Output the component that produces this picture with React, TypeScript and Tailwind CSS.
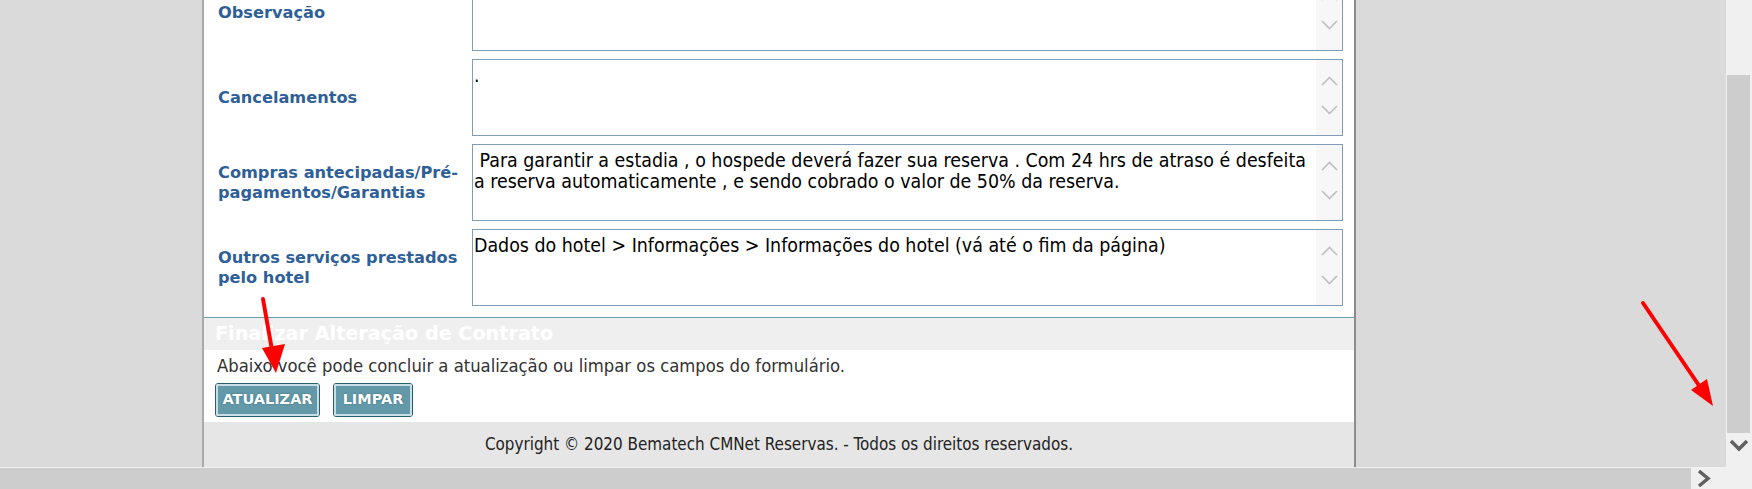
import React from "react";

type Field = { label: string[]; value: string[] };

const fields: Field[] = [
  { label: ["Observação"], value: [] },
  { label: ["Cancelamentos"], value: ["."] },
  {
    label: ["Compras antecipadas/Pré-", "pagamentos/Garantias"],
    value: [
      " Para garantir a estadia , o hospede deverá fazer sua reserva . Com 24 hrs de atraso é desfeita",
      "a reserva automaticamente , e sendo cobrado o valor de 50% da reserva.",
    ],
  },
  {
    label: ["Outros serviços prestados", "pelo hotel"],
    value: ["Dados do hotel > Informações > Informações do hotel (vá até o fim da página)"],
  },
];

function Chevron({ up }: { up?: boolean }) {
  return (
    <svg width="17" height="10" viewBox="0 0 17 10">
      <polyline
        points={up ? "1,9 8.5,1.5 16,9" : "1,1 8.5,8.5 16,1"}
        fill="none"
        stroke="#c0c0c0"
        strokeWidth="1.7"
      />
    </svg>
  );
}

function TextBox({ lines }: { lines: string[] }) {
  return (
    <div className="flex h-[77px] w-[871px] border border-[#7f9db9] bg-white">
      <div className="flex-1 whitespace-pre pl-[1px] pt-[5px] font-['DejaVu_Sans_Condensed','DejaVu_Sans',sans-serif] text-[19.4px] leading-[21px] text-black">
        {lines.map((l, i) => (
          <div key={i}>{l}</div>
        ))}
      </div>
      <div className="flex w-[26px] flex-col items-center justify-between bg-[#f7f7f7] pb-[20px] pt-[16px]">
        <Chevron up />
        <Chevron />
      </div>
    </div>
  );
}

function Button({ children, w }: { children: React.ReactNode; w: string }) {
  return (
    <button
      className={`${w} h-[34px] rounded-[3px] border border-[#24606d] p-0`}
    >
      <span className="flex h-full w-full items-center justify-center rounded-[2px] border-2 border-[#c9dee4] bg-[#6399a9] font-['DejaVu_Sans'] text-[14.5px] font-bold text-white [text-shadow:0_0_2px_#35707e]">
        {children}
      </span>
    </button>
  );
}

export default function App() {
  return (
    <div className="relative h-[489px] w-[1752px] overflow-hidden bg-[#dadada]">
      <div className="flex h-[467px]">
        <div className="flex-1">
          <div className="ml-[202px] flex h-[467px] w-[1154px] flex-col overflow-hidden border-l-2 border-r-2 border-l-[#a9a9a9] border-r-[#8c8c8c] bg-white">
            <div className="-mt-[26px] flex flex-col gap-[8px] pl-[14px]">
              {fields.map((f) => (
                <div key={f.label[0]} className="flex items-center">
                  <div className="w-[254px] font-['DejaVu_Sans'] text-[16.2px] font-bold leading-[20px] text-[#2f5f98]">
                    {f.label.map((l) => (
                      <div key={l}>{l}</div>
                    ))}
                  </div>
                  <TextBox lines={f.value} />
                </div>
              ))}
            </div>

            <div className="mt-[11px] h-[33px] border-t border-[#6a9fa8] bg-[#efefef] pl-[11px] font-['DejaVu_Sans'] text-[19.2px] font-bold leading-[32px] text-white">
              Finalizar Alteração de Contrato
            </div>
            <div className="pl-[13px] font-['DejaVu_Sans_Condensed','DejaVu_Sans',sans-serif] text-[18.3px] leading-[32px] text-[#333]">
              Abaixo você pode concluir a atualização ou limpar os campos do formulário.
            </div>
            <div className="mt-[1px] flex gap-[13px] pl-[11px]">
              <Button w="w-[105px]">ATUALIZAR</Button>
              <Button w="w-[80px]">LIMPAR</Button>
            </div>

            <div className="mt-[5px] flex flex-1 items-center justify-center bg-[#e6e6e6] font-['DejaVu_Sans_Condensed','DejaVu_Sans',sans-serif] text-[16.9px] text-[#222]">
              Copyright © 2020 Bematech CMNet Reservas. - Todos os direitos reservados.
            </div>
          </div>
        </div>

        {/* vertical scrollbar */}
        <div className="flex w-[26px] flex-col bg-[#f0f0f0] pl-[1px] pr-[2px]">
          <div className="h-[75px]" />
          <div className="h-[358px] bg-[#cdcdcd]" />
          <div className="flex justify-center pt-[5px]">
            <svg width="20" height="15" viewBox="0 0 20 15">
              <polyline points="2,3 10,11 18,3" fill="none" stroke="#606060" strokeWidth="3.5" />
            </svg>
          </div>
        </div>
      </div>

      {/* horizontal scrollbar */}
      <div className="flex h-[22px] bg-[#f0f0f0] pt-[1px]">
        <div className="h-[21px] w-[1691px] bg-[#cdcdcd]" />
        <div className="flex w-[26px] items-center justify-center">
          <svg width="16" height="19" viewBox="0 0 16 19">
            <polyline points="3,2 12,9.5 3,17" fill="none" stroke="#606060" strokeWidth="3.5" />
          </svg>
        </div>
      </div>

      {/* red annotation arrows */}
      <svg className="pointer-events-none absolute left-0 top-0" width="1752" height="489">
        <line x1="263" y1="299" x2="272" y2="350" stroke="#ff0000" strokeWidth="4" strokeLinecap="round" />
        <polygon points="262,348 285,344 276,373" fill="#ff0000" />
        <line x1="1643" y1="303" x2="1700" y2="387" stroke="#ff0000" strokeWidth="4" strokeLinecap="round" />
        <polygon points="1691,390 1707,379 1713,406" fill="#ff0000" />
      </svg>
    </div>
  );
}
